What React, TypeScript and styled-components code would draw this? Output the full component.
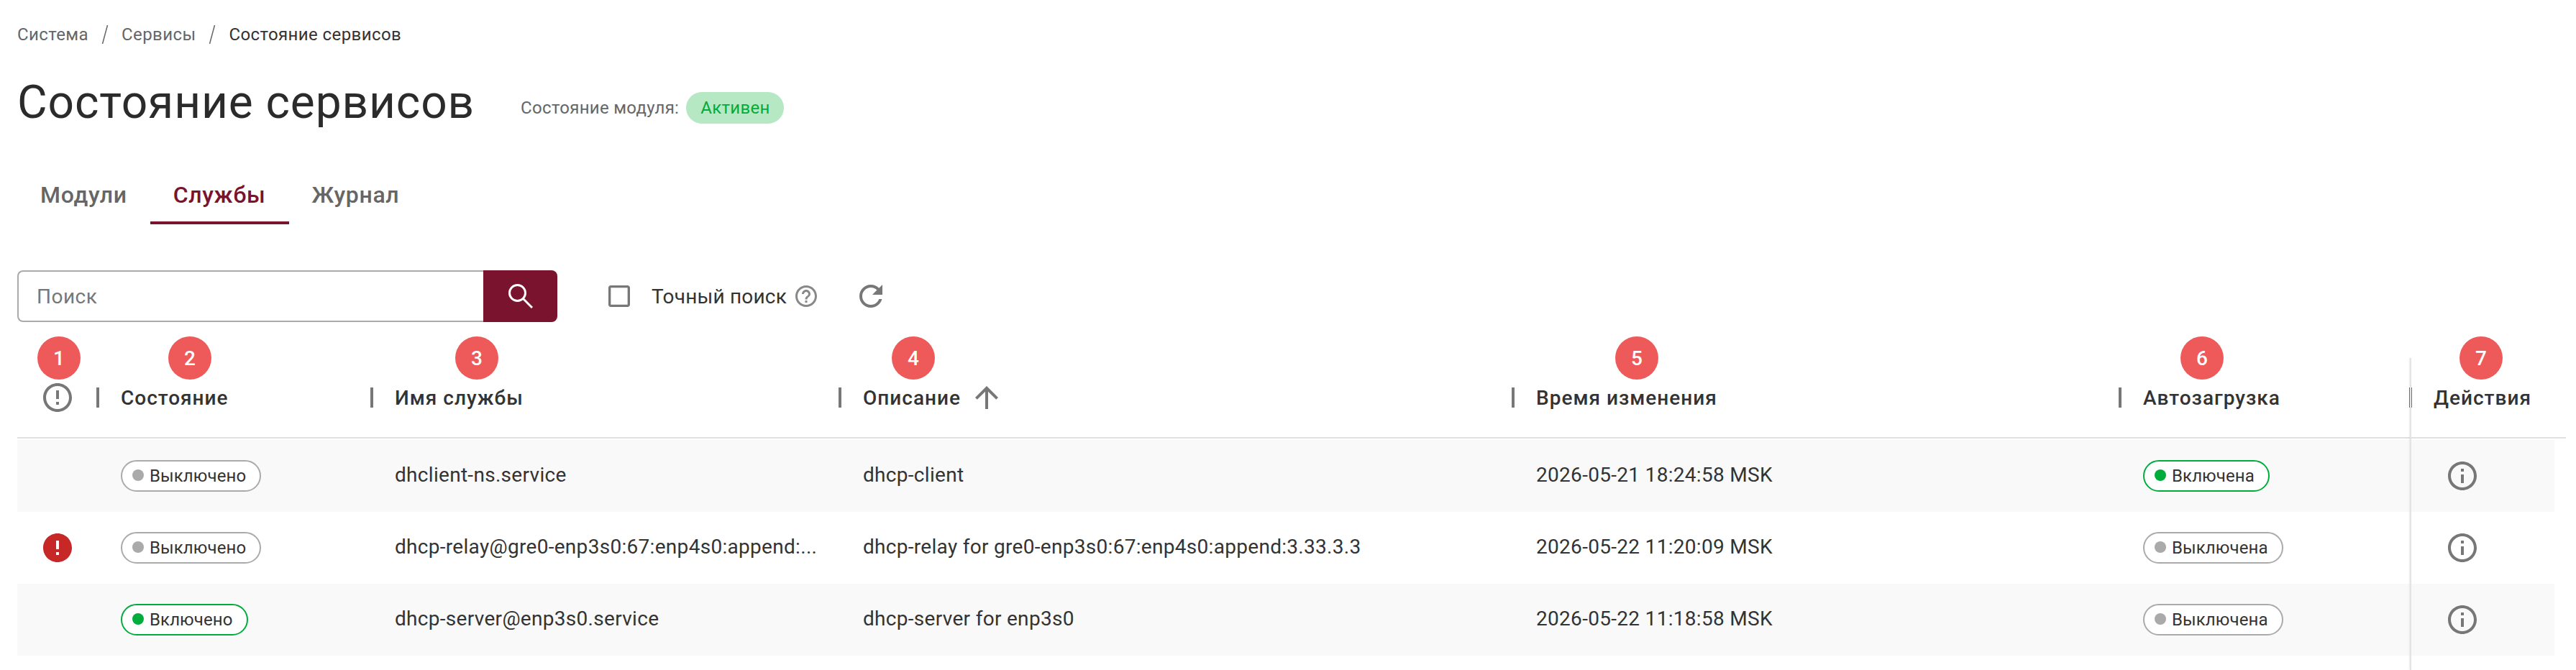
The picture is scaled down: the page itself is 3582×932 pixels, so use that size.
import * as React from "react";
import styled, {createGlobalStyle} from "styled-components";

const GlobalStyle = createGlobalStyle`
  html, body {
    margin: 0;
    padding: 0;
    background: #fff;
    overflow: hidden;
  }
  body {
    font-family: Roboto, "Liberation Sans", sans-serif;
    color: #333;
  }
`;

const Page = styled.div`
  width: 3582px;
  height: 932px;
  box-sizing: border-box;
  padding: 32px 14px 0 24px;
  display: flex;
  flex-direction: column;
  overflow: hidden;
`;

const Crumbs = styled.nav`
  height: 32px;
  display: flex;
  align-items: center;
  font-size: 24px;
  letter-spacing: 0.4px;
  color: #666;
`;

const CrumbSlash = styled.svg`
  display: block;
  width: 10px;
  height: 26px;
  margin: 0 18px;
  stroke: #666;
  stroke-width: 1.5;
`;

const CrumbCurrent = styled.span`
  color: #333;
`;

const TitleRow = styled.div`
  margin-top: 43px;
  height: 72px;
  display: flex;
  align-items: flex-start;
`;

const Title = styled.h1`
  margin: 0;
  font-size: 64px;
  line-height: 72px;
  font-weight: 400;
  letter-spacing: 0.9px;
  color: #2b2b2b;
`;

const ModuleState = styled.div`
  margin: 21px 0 0 64px;
  display: flex;
  align-items: center;
  gap: 10px;
  font-size: 24px;
  letter-spacing: 0.3px;
  color: #666;
`;

const ActiveBadge = styled.span`
  height: 44px;
  padding: 0 19px 0 20px;
  display: flex;
  align-items: center;
  border-radius: 22px;
  background: #b5e8c3;
  color: #00ad3c;
`;

const Tabs = styled.div`
  margin-top: 55px;
  height: 78px;
  display: flex;
`;

const Tab = styled.div<{$active?: boolean}>`
  box-sizing: border-box;
  height: 78px;
  padding: 0 32px;
  display: flex;
  align-items: center;
  font-size: 32px;
  font-weight: 500;
  letter-spacing: 0.7px;
  color: ${props => (props.$active ? "#7a132e" : "#666")};
  border-bottom: 4px solid ${props => (props.$active ? "#7a132e" : "transparent")};
`;

const SearchRow = styled.div`
  margin-top: 64px;
  height: 72px;
  display: flex;
  align-items: center;
`;

const SearchBox = styled.div`
  width: 751px;
  height: 72px;
  display: flex;
`;

const SearchInput = styled.div`
  flex: 1;
  box-sizing: border-box;
  padding-left: 25px;
  display: flex;
  align-items: center;
  font-size: 28px;
  letter-spacing: 0.5px;
  color: #777;
  border: 2px solid #aaa;
  border-right: 0;
  border-radius: 8px 0 0 8px;
`;

const SearchButton = styled.div`
  width: 103px;
  display: flex;
  align-items: center;
  justify-content: center;
  background: #7a132e;
  border-radius: 0 8px 8px 0;
`;

const SearchGlyph = styled.svg`
  display: block;
  width: 34px;
  height: 34px;
  fill: none;
  stroke: #fff;
  stroke-width: 3;
`;

const ExactSearch = styled.div`
  margin-left: 66px;
  display: flex;
  align-items: center;
  font-size: 28px;
  letter-spacing: 0.2px;
  color: #333;
`;

const ExactLabel = styled.span`
  margin: 0 9px 0 25px;
`;

const RefreshWrap = styled.div`
  margin-left: 48px;
  display: flex;
`;

const Table = styled.div`
  position: relative;
  flex: 1;
  margin-top: 50px;

  &::after {
    content: "";
    position: absolute;
    top: 0;
    bottom: 0;
    left: 3327px;
    width: 2px;
    background: #e4e4e4;
    box-shadow: -1px 0 2px rgba(0, 0, 0, 0.08);
  }
`;

const Head = styled.div`
  height: 112px;
  margin-bottom: 2px;
  box-sizing: border-box;
  display: grid;
  grid-template-columns: 112px 381px 651px 936px 844px 404px 216px;
  border-bottom: 2px solid #e0e0e0;
`;

const HeadCell = styled.div`
  position: relative;
  display: flex;
  align-items: center;
  font-size: 28px;
  font-weight: 500;
  letter-spacing: 1px;
  color: #333;
`;

const HeadDivider = styled.span`
  width: 4px;
  height: 28px;
  margin: 0 30px 0 -2px;
  background: #777;
`;

const Marker = styled.span<{$left: number}>`
  position: absolute;
  top: -30px;
  left: ${props => props.$left}px;
  width: 60px;
  height: 60px;
  border-radius: 50%;
  display: flex;
  align-items: center;
  justify-content: center;
  background: #ee5a5a;
  color: #fff;
  font-size: 28px;
  font-weight: 500;
  letter-spacing: 0;
`;

const Row = styled.div<{$shaded?: boolean}>`
  width: 3528px;
  height: 100px;
  display: grid;
  grid-template-columns: 112px 381px 651px 936px 844px 404px 200px;
  background: ${props => (props.$shaded ? "#f9f9f9" : "#fff")};
`;

const Cell = styled.div`
  padding-left: 32px;
  display: flex;
  align-items: center;
  font-size: 28px;
  letter-spacing: 0.3px;
  color: #333;
  white-space: nowrap;
`;

const RowText = styled.span`
  margin-bottom: 4px;
`;

const IconCell = styled.div<{$pad: number}>`
  padding-left: ${props => props.$pad}px;
  display: flex;
  align-items: center;
`;

const Chip = styled.span<{$on?: boolean}>`
  box-sizing: border-box;
  height: 44px;
  padding: 0 19px 0 14px;
  display: inline-flex;
  align-items: center;
  gap: 8px;
  border-radius: 22px;
  font-size: 24px;
  letter-spacing: 0.1px;
  color: #333;
  background: #fff;
  border: 2px solid ${props => (props.$on ? "#00ad3c" : "#aaa")};
`;

const ChipDot = styled.span<{$on?: boolean}>`
  width: 16px;
  height: 16px;
  margin-bottom: 2px;
  border-radius: 50%;
  background: ${props => (props.$on ? "#00ad3c" : "#aaa")};
`;

const Svg = styled.svg<{$size: number; $color: string}>`
  display: block;
  flex: none;
  width: ${props => props.$size}px;
  height: ${props => props.$size}px;
  fill: ${props => props.$color};
`;

const SortArrow = styled.span`
  margin-left: 12px;
  display: flex;
`;

const PATHS = {
    alertOutline: "M11 15h2v2h-2zm0-8h2v6h-2zm.99-5C6.47 2 2 6.48 2 12s4.47 10 9.99 10C17.52 22 22 17.52 22 12S17.52 2 11.99 2zM12 20c-4.42 0-8-3.58-8-8s3.58-8 8-8 8 3.58 8 8-3.58 8-8 8z",
    alert: "M12 2C6.48 2 2 6.48 2 12s4.48 10 10 10 10-4.48 10-10S17.52 2 12 2zm1 15h-2v-2h2v2zm0-4h-2V7h2v6z",
    info: "M11 7h2v2h-2zm0 4h2v6h-2zm1-9C6.48 2 2 6.48 2 12s4.48 10 10 10 10-4.48 10-10S17.52 2 12 2zm0 18c-4.41 0-8-3.59-8-8s3.59-8 8-8 8 3.59 8 8-3.59 8-8 8z",
    help: "M11 18h2v-2h-2v2zm1-16C6.48 2 2 6.48 2 12s4.48 10 10 10 10-4.48 10-10S17.52 2 12 2zm0 18c-4.41 0-8-3.59-8-8s3.59-8 8-8 8 3.59 8 8-3.59 8-8 8zm0-14c-2.21 0-4 1.79-4 4h2c0-1.1.9-2 2-2s2 .9 2 2c0 2-3 1.75-3 5h2c0-2.25 3-2.5 3-5 0-2.21-1.79-4-4-4z",
    refresh: "M17.65 6.35C16.2 4.9 14.21 4 11.99 4c-4.42 0-7.99 3.58-7.99 8s3.57 8 7.99 8c3.73 0 6.84-2.55 7.73-6h-2.08c-.82 2.33-3.04 4-5.65 4-3.31 0-6-2.69-6-6s2.69-6 6-6c1.66 0 3.14.69 4.22 1.78L13 11h7V4l-2.35 2.35z",
    arrowUp: "M4 12l1.41 1.41L11 7.83V20h2V7.83l5.58 5.59L20 12l-8-8-8 8z",
    box: "M19 5v14H5V5h14m0-2H5c-1.1 0-2 .9-2 2v14c0 1.1.9 2 2 2h14c1.1 0 2-.9 2-2V5c0-1.1-.9-2-2-2z"
};

const Icon = ({name, size, color}: {name: keyof typeof PATHS; size: number; color: string}) => (
    <Svg viewBox="0 0 24 24" $size={size} $color={color}>
        <path d={PATHS[name]} />
    </Svg>
);

const Slash = () => (
    <CrumbSlash viewBox="0 0 10 26">
        <line x1="8.5" y1="0" x2="1.5" y2="26" />
    </CrumbSlash>
);

const COLUMNS = [
    {title: "Состояние", marker: 98},
    {title: "Имя службы", marker: 116},
    {title: "Описание", marker: 72, sorted: true},
    {title: "Время изменения", marker: 142},
    {title: "Автозагрузка", marker: 84},
    {title: "Действия", marker: 68}
];

const ROWS = [
    {
        alert: false,
        state: false,
        name: "dhclient-ns.service",
        description: "dhcp-client",
        time: "2026-05-21 18:24:58 MSK",
        autostart: true
    },
    {
        alert: true,
        state: false,
        name: "dhcp-relay@gre0-enp3s0:67:enp4s0:append:...",
        description: "dhcp-relay for gre0-enp3s0:67:enp4s0:append:3.33.3.3",
        time: "2026-05-22 11:20:09 MSK",
        autostart: false
    },
    {
        alert: false,
        state: true,
        name: "dhcp-server@enp3s0.service",
        description: "dhcp-server for enp3s0",
        time: "2026-05-22 11:18:58 MSK",
        autostart: false
    }
];

const App = () => (
    <Page>
        <GlobalStyle />
        <Crumbs>
            Система
            <Slash />
            Сервисы
            <Slash />
            <CrumbCurrent>Состояние сервисов</CrumbCurrent>
        </Crumbs>
        <TitleRow>
            <Title>Состояние сервисов</Title>
            <ModuleState>
                Состояние модуля:
                <ActiveBadge>Активен</ActiveBadge>
            </ModuleState>
        </TitleRow>
        <Tabs>
            <Tab>Модули</Tab>
            <Tab $active>Службы</Tab>
            <Tab>Журнал</Tab>
        </Tabs>
        <SearchRow>
            <SearchBox>
                <SearchInput>Поиск</SearchInput>
                <SearchButton>
                    <SearchGlyph viewBox="0 0 34 34">
                        <circle cx="12.5" cy="12.5" r="11" />
                        <line x1="20.5" y1="20.5" x2="33" y2="33" />
                    </SearchGlyph>
                </SearchButton>
            </SearchBox>
            <ExactSearch>
                <Icon name="box" size={40} color="#777" />
                <ExactLabel>Точный поиск</ExactLabel>
                <Icon name="help" size={36} color="#888" />
            </ExactSearch>
            <RefreshWrap>
                <Icon name="refresh" size={48} color="#777" />
            </RefreshWrap>
        </SearchRow>
        <Table>
            <Head>
                <HeadCell>
                    <Marker $left={28}>1</Marker>
                    <IconCell $pad={32}>
                        <Icon name="alertOutline" size={48} color="#777" />
                    </IconCell>
                </HeadCell>
                {COLUMNS.map((column, index) => (
                    <HeadCell key={column.title}>
                        <Marker $left={column.marker}>{index + 2}</Marker>
                        <HeadDivider />
                        {column.title}
                        {column.sorted && (
                            <SortArrow>
                                <Icon name="arrowUp" size={48} color="#777" />
                            </SortArrow>
                        )}
                    </HeadCell>
                ))}
            </Head>
            {ROWS.map((row, index) => (
                <Row key={row.name} $shaded={index % 2 === 0}>
                    <IconCell $pad={32}>
                        {row.alert && <Icon name="alert" size={48} color="#c62828" />}
                    </IconCell>
                    <Cell>
                        <Chip $on={row.state}>
                            <ChipDot $on={row.state} />
                            {row.state ? "Включено" : "Выключено"}
                        </Chip>
                    </Cell>
                    <Cell><RowText>{row.name}</RowText></Cell>
                    <Cell><RowText>{row.description}</RowText></Cell>
                    <Cell><RowText>{row.time}</RowText></Cell>
                    <Cell>
                        <Chip $on={row.autostart}>
                            <ChipDot $on={row.autostart} />
                            {row.autostart ? "Включена" : "Выключена"}
                        </Chip>
                    </Cell>
                    <IconCell $pad={48}>
                        <Icon name="info" size={48} color="#777" />
                    </IconCell>
                </Row>
            ))}
        </Table>
    </Page>
);

export default App;
